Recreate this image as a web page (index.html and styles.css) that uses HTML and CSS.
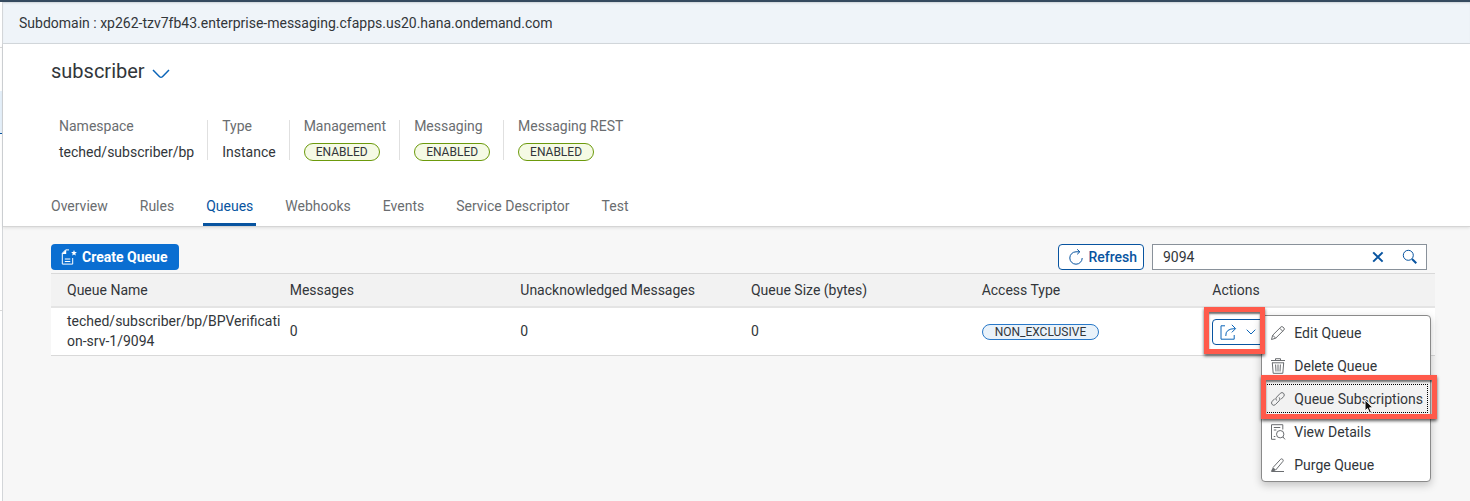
FILE: index.html
```html
<!DOCTYPE html>
<html lang="en">
<head>
<meta charset="utf-8">
<title>Queues</title>
<link rel="stylesheet" href="styles.css">
</head>
<body>
<div class="shell-bar"></div>
<div class="shell">
  <div class="side"><span class="side-top"></span><span class="side-active"></span><span class="side-rest"></span></div>
  <main class="content">
    <div class="subdomain">Subdomain : xp262-tzv7fb43.enterprise-messaging.cfapps.us20.hana.ondemand.com</div>
    <header class="header">
      <h1 class="title">subscriber
        <button class="title-toggle" aria-label="Switch client"><svg width="18" height="10" viewBox="0 0 18 10"><path d="M1 1l6.6 6.7q1.4 1.2 2.8 0L17 1"/></svg></button>
      </h1>
      <dl class="facts">
        <div class="fact"><dt>Namespace</dt><dd>teched/subscriber/bp</dd></div>
        <div class="fact"><dt>Type</dt><dd>Instance</dd></div>
        <div class="fact"><dt>Management</dt><dd><span class="tag tag-green">ENABLED</span></dd></div>
        <div class="fact"><dt>Messaging</dt><dd><span class="tag tag-green">ENABLED</span></dd></div>
        <div class="fact"><dt>Messaging REST</dt><dd><span class="tag tag-green">ENABLED</span></dd></div>
      </dl>
      <nav class="tabs">
        <a href="#overview">Overview</a>
        <a href="#rules">Rules</a>
        <a href="#queues" class="active" aria-current="page">Queues</a>
        <a href="#webhooks">Webhooks</a>
        <a href="#events">Events</a>
        <a href="#service">Service Descriptor</a>
        <a href="#test">Test</a>
      </nav>
    </header>
    <section class="queues">
      <div class="toolbar">
        <button class="create"><svg width="16" height="16" viewBox="0 0 16 16"><path class="line" d="M8 .9H4.6L1.3 4.2v10.9h10.4V9M3.8 10h5.5M3.8 12.5h5.5"/><path class="fill" d="M5.2.6v4.3H.9zM13 1l.8 2 2.1.1-1.6 1.4.5 2.1-1.8-1.1-1.8 1.1.5-2.1-1.6-1.4 2.1-.1z"/></svg>Create Queue</button>
        <span class="spacer"></span>
        <button class="refresh"><svg width="16" height="16" viewBox="0 0 16 16"><path d="M11.8 2.8H8A6.2 6.2 0 1 0 14.2 9M9.2 .3l2.600 2.500-2.600 2.500"/></svg>Refresh</button>
        <div class="search">
          <input type="text" value="9094" aria-label="Search queues">
          <button class="clear" aria-label="Clear"><svg width="12" height="12" viewBox="0 0 12 12"><path d="M1.2 1.4l9.4 9.2M10.6 1.4l-9.4 9.2"/></svg></button>
          <button class="find" aria-label="Search"><svg width="16" height="16" viewBox="0 0 16 16"><circle cx="6.3" cy="6.3" r="5"/><path class="handle" d="M10 10l4.3 4.3"/></svg></button>
        </div>
      </div>
      <table class="table">
        <thead><tr><th>Queue Name</th><th>Messages</th><th>Unacknowledged Messages</th><th>Queue Size (bytes)</th><th>Access Type</th><th>Actions</th></tr></thead>
        <tbody><tr>
          <td>teched/subscriber/bp/BPVerification-srv-1/9094</td>
          <td>0</td><td>0</td><td>0</td>
          <td><span class="tag tag-blue">NON_EXCLUSIVE</span></td>
          <td>
            <div class="actions">
              <button class="action-button" aria-label="Queue actions" aria-expanded="true">
                <svg width="17" height="16" viewBox="0 0 17 16"><path d="M5 1.8H1v13.4h13.2V11M5.8 12q-.5-7.4 9.4-7.4M11.8 .8l3.8 3.8-3.8 3.8"/></svg>
                <svg width="10" height="6" viewBox="0 0 10 6"><path d="M.7 .7L5 5 9.3 .7"/></svg>
              </button>
              <div class="menu" role="menu">
                <button role="menuitem"><svg width="16" height="16" viewBox="0 0 16 16"><path d="M1.5 14.5l1.2-4.3 8.2-8.2q1-1 2 0l1 1q1 1 0 2l-8.2 8.2zM2.7 10.2l3 3M9.7 3.2l3 3"/></svg>Edit Queue</button>
                <button role="menuitem"><svg width="16" height="16" viewBox="0 0 16 16"><path d="M1 2.5h14M5.5 2.5V.7h5v1.8M2.3 4.8l.9 10.5h9.6l.9-10.5M2 4.8h12M5.6 6.5l.4 7M8 6.5v7M10.4 6.5l-.4 7"/></svg>Delete Queue</button>
                <button role="menuitem" class="focused"><svg width="16" height="16" viewBox="0 0 16 16"><path d="M6.6 9.5q-1.6-1.7 0-3.3l3.7-3.9q1.7-1.5 3.3 0 1.5 1.7 0 3.3l-2.6 2.7M9.2 6.4q1.6 1.7 0 3.3l-3.8 3.9q-1.6 1.5-3.2 0-1.5-1.7 0-3.3l2.6-2.7"/></svg>Queue Subscriptions</button>
                <button role="menuitem"><svg width="16" height="16" viewBox="0 0 16 16"><path d="M5.5 15.3H1.5V.7h11.3v4.8M3.8 3.5h6.5M3.8 6h2.5M3.8 12.5h1.5M13 13l2 2.4"/><circle cx="10.2" cy="10.2" r="3.7"/></svg>View Details</button>
                <button role="menuitem"><svg width="16" height="16" viewBox="0 0 16 16"><path d="M3 10.5l7.7-8.3q1-.8 2 .1t.2 2.1L5.700 13M1.500 14.500H14"/><path class="dark" d="M3 10.200l3 2.900-2.600 1.500H.8z"/></svg>Purge Queue</button>
              </div>
              <span class="mark mark-button"></span>
              <span class="mark mark-item"></span>
              <svg class="pointer" width="10" height="15" viewBox="0 0 10 15"><path d="M1 .8v11l2.500-2.300 2 4.700 2-.9-2-4.500H9z"/></svg>
            </div>
          </td>
        </tr></tbody>
      </table>
    </section>
  </main>
</div>
</body>
</html>
```
FILE: styles.css
```css
* { box-sizing: border-box; }
body {
  margin: 0;
  min-height: 100vh;
  display: flex;
  flex-direction: column;
  background: #f7f7f7;
  color: #32363a;
  font: 14px/20px Roboto, "Liberation Sans", sans-serif;
}
button, input { font: inherit; color: inherit; margin: 0; }
button { border: 0; background: none; padding: 0; display: flex; align-items: center; }
svg { display: block; flex: none; fill: none; stroke: currentColor; }

.shell-bar { height: 2px; background: #354a5f; }
.shell { flex: 1; display: flex; }
.side { width: 3px; border-right: 1px solid #d3d6d9; display: flex; flex-direction: column; background: #fff; }
.side-top { height: 46px; border-bottom: 1px solid #d9d9d9; }
.side-active { height: 43px; margin-top: 43px; background: #e5f0fa; border-bottom: 1px solid #0854a0; }
.side-rest { height: 177px; border-bottom: 1px solid #d9d9d9; }
.content { flex: 1; min-width: 0; }

.subdomain {
  padding: 11px 16px 10px;
  background: #eff4f9;
  border-bottom: 1px solid #d5dade;
  box-shadow: inset 0 2px 2px -1px #ccd2d7;
}
.header { background: #fff; padding: 14px 48px 0; border-bottom: 1px solid #d5d5d5; box-shadow: 0 1px 3px #0000001a; }
.title { display: flex; align-items: center; gap: 7px; margin: 0; font-size: 20px; line-height: 26px; font-weight: 400; }
.title-toggle { color: #0a64b8; padding-top: 5px; }
.title-toggle svg { stroke-width: 1.5; }

.facts { display: flex; margin: 36px 0 0; padding-left: 8px; }
.fact { height: 40px; padding-right: 13px; }
.fact + .fact { padding-left: 14px; border-left: 1px solid #e0e0e0; }
.fact dt { color: #6a6d70; line-height: 12px; }
.fact dd { margin: 10px 0 0; height: 20px; display: flex; align-items: center; }
.tag { display: inline-block; padding: 0 11px; border: 1px solid; border-radius: 9px; font-size: 12px; line-height: 16px; }
.tag-green { border-color: #6c9a0c; background: #f5fae5; }
.tag-blue { padding: 0 12px; border-color: #2878c8; background: #e9f2fa; line-height: 14px; vertical-align: middle; }

.tabs { display: flex; gap: 26px; margin: 26px 0 0 -3px; }
.tabs a { padding: 10px 3px 7px; border-bottom: 3px solid transparent; color: #6a6d70; text-decoration: none; }
.tabs .active { color: #0854a0; border-color: #0854a0; }

.queues { padding: 17px 35px 20px 48px; }
.toolbar { display: flex; gap: 8px; padding-right: 8px; }
.spacer { flex: 1; }
.create, .refresh { height: 26px; border-radius: 4px; gap: 5px; }
.create { padding: 0 12px 0 10px; background: #0a6ed1; color: #fff; font-weight: 700; }
.create .fill { fill: #fff; stroke: none; }
.refresh { padding: 0 6px 0 9px; border: 1px solid #0854a0; color: #0854a0; font-weight: 500; background: #fff; gap: 4px; }
.search { display: flex; width: 275px; height: 26px; border: 1px solid #89919a; background: #fff; color: #0854a0; }
.search input { flex: 1; min-width: 0; border: 0; outline: 0; padding: 0 10px; color: #32363a; background: none; }
.search button { width: 32px; justify-content: center; }
.clear svg { stroke-width: 2; }
.find .handle { stroke-width: 2; }

.table { width: 100%; margin-top: 3px; border-spacing: 0; table-layout: fixed; }
.table th { height: 35px; padding: 0 8px; text-align: left; font-weight: 400; background: #f2f2f2; border-top: 1px solid #d9d9d9; border-bottom: 2px solid #e4e4e4; }
.table td { height: 48px; padding: 3px 8px 4px; background: #fff; border-bottom: 1px solid #d9d9d9; overflow-wrap: anywhere; }
.table th:first-child, .table td:first-child { padding-left: 16px; padding-right: 0; }

.actions { position: relative; margin-top: 2px; }
.action-button { width: 60px; height: 26px; padding-left: 7px; gap: 9px; border: 1px solid #0854a0; border-radius: 4px; color: #0a64b8; }
.menu {
  position: absolute;
  left: 49px;
  top: -4px;
  width: 170px;
  border: 1px solid #8a8a8a;
  border-radius: 4px;
  background: #fff;
  box-shadow: 0 3px 8px #00000038;
}
.menu button { width: 100%; height: 33px; padding-left: 8px; gap: 8px; white-space: nowrap; }
.menu svg { color: #6a6d70; }
.menu .dark { fill: #6a6d70; stroke: none; }
.menu .focused { background: #f2f2f2; outline: 1px dotted #000; outline-offset: -3px; }
.mark { position: absolute; border: 5px solid #ff5a4b; box-shadow: 0 2px 3px #000000a0, inset 0 2px 2px #00000090; pointer-events: none; }
.mark-button { left: -8px; top: -12px; width: 61px; height: 47px; }
.mark-item { left: 49px; top: 56px; width: 176px; height: 44px; }
.pointer { position: absolute; left: 152px; top: 80px; fill: #111; stroke: #fff; stroke-width: 1; }
```
